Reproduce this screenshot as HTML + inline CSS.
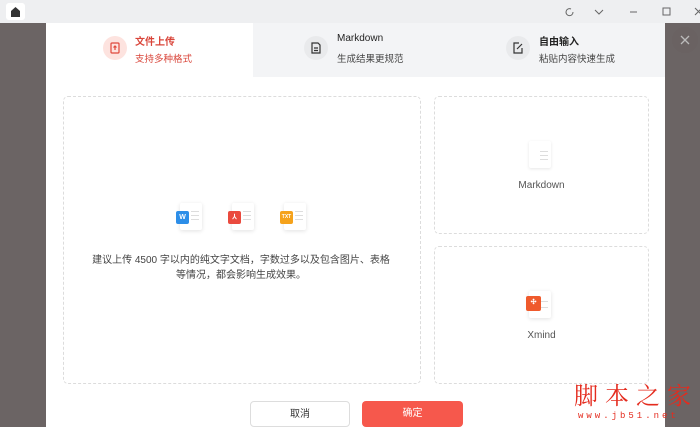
<!DOCTYPE html>
<html><head><meta charset="utf-8"><style>
*{margin:0;padding:0;box-sizing:border-box}
html,body{width:700px;height:427px;overflow:hidden}
body{position:relative;background:#6b6464;font-family:"Liberation Sans","Noto Sans CJK SC",sans-serif}
.tb{position:absolute;left:0;top:0;width:700px;height:23px;background:#eeeff1}
.home{position:absolute;left:6px;top:3px;width:19px;height:17px;background:#fff;border-radius:3px}
.modal{position:absolute;left:46px;top:23px;width:619px;height:404px;background:#fff}
.tabs{position:absolute;left:0;top:0;width:619px;height:54px;background:#f3f4f6}
.tab1{position:absolute;left:0;top:0;width:207px;height:54px;background:#fff}
.ic{position:absolute;width:24px;height:24px;border-radius:12px;background:#e9eaec}
.t1{position:absolute;font-size:10px;color:#222;white-space:nowrap}
.t2{position:absolute;font-size:9.5px;color:#444;white-space:nowrap}
.box{position:absolute;border:1px dashed #dcdcdc;border-radius:5px}
.btn{position:absolute;height:26px;border-radius:4px;font-size:10px;text-align:center;line-height:26px}
.doc{position:absolute;width:22px;height:27px;background:#fff;border-radius:2px;box-shadow:0 1px 4px rgba(0,0,0,.12)}
.doc i{position:absolute;right:3px;height:1px;width:8px;background:#ddd}
.badge{position:absolute;left:-4px;top:8px;width:13px;height:13px;border-radius:2px;color:#fff;font-size:7px;font-weight:bold;text-align:center;line-height:13px}
</style></head><body>
<div class="tb"><div class="home"><svg width="19" height="17"><path d="M5 8 L9.5 4 L14 8 V14 H5Z" fill="#333"/></svg></div>
<svg style="position:absolute;left:560px;top:4px" width="140" height="15" fill="none" stroke="#666" stroke-width="1">
<path d="M11 5 A3.5 3.5 0 1 0 13 8"/><path d="M35 6 L39 10 L43 6"/><path d="M70 8 H77"/><rect x="103" y="4" width="7" height="7"/><path d="M135 4 L142 11 M142 4 L135 11"/></svg></div>
<div style="position:absolute;left:672px;top:27px;width:26px;height:26px;border-radius:13px;background:#6a6262"><svg width="26" height="26" stroke="#bbb" stroke-width="1.3"><path d="M9 9 L17 17 M17 9 L9 17"/></svg></div>
<div class="modal">
<div class="tabs"><div class="tab1"></div>
<div class="ic" style="left:57px;top:13px;background:#fde3df"><svg width="24" height="24" fill="none" stroke="#e0493c" stroke-width="1.2"><rect x="8" y="7" width="8" height="10" rx="1"/><path d="M12 14 V10 M10.5 11.5 L12 10 L13.5 11.5"/></svg></div>
<div class="t1" style="left:89px;top:10px;color:#d9453a;font-weight:bold">文件上传</div>
<div class="t2" style="left:89px;top:28px;color:#d9453a">支持多种格式</div>
<div class="ic" style="left:258px;top:13px"><svg width="24" height="24" fill="none" stroke="#333" stroke-width="1.2"><path d="M8 7 H14 L16 9 V17 H8Z M10 12 H14 M10 14.5 H14"/></svg></div>
<div class="t1" style="left:291px;top:10px">Markdown</div>
<div class="t2" style="left:291px;top:28px">生成结果更规范</div>
<div class="ic" style="left:460px;top:13px"><svg width="24" height="24" fill="none" stroke="#333" stroke-width="1.2"><path d="M13 7 H8 V17 H16 V12 M11 13 L16 8"/></svg></div>
<div class="t1" style="left:493px;top:10px;font-weight:bold">自由输入</div>
<div class="t2" style="left:493px;top:28px">粘贴内容快速生成</div>
</div>
<div class="box" style="left:17px;top:73px;width:358px;height:288px"></div>
<div class="doc" style="left:134px;top:180px"><i style="top:8px"></i><i style="top:12px"></i><i style="top:16px"></i><div class="badge" style="background:#2d8ee8">W</div></div>
<div class="doc" style="left:186px;top:180px"><i style="top:8px"></i><i style="top:12px"></i><i style="top:16px"></i><div class="badge" style="background:#ea4a3e">⅄</div></div>
<div class="doc" style="left:238px;top:180px"><i style="top:8px"></i><i style="top:12px"></i><i style="top:16px"></i><div class="badge" style="background:#f5a21b;font-size:5px">TXT</div></div>
<div style="position:absolute;left:42px;top:230px;width:306px;font-size:10px;color:#444;text-align:center;line-height:15px">建议上传 4500 字以内的纯文字文档，字数过多以及包含图片、表格等情况，都会影响生成效果。</div>
<div class="box" style="left:388px;top:73px;width:215px;height:138px"></div>
<div class="doc" style="left:483px;top:118px;box-shadow:0 1px 3px rgba(0,0,0,.1)"><i style="top:10px"></i><i style="top:14px"></i><i style="top:18px"></i></div>
<div style="position:absolute;left:388px;top:157px;width:215px;text-align:center;font-size:10px;color:#555">Markdown</div>
<div class="box" style="left:388px;top:223px;width:215px;height:138px"></div>
<div class="doc" style="left:483px;top:268px"><i style="top:10px"></i><i style="top:16px"></i><div class="badge" style="background:#ef5a2c;left:-3px;top:5px;width:15px;height:15px">✣</div></div>
<div style="position:absolute;left:388px;top:307px;width:215px;text-align:center;font-size:10px;color:#555">Xmind</div>
<div class="btn" style="left:204px;top:378px;width:100px;border:1px solid #ddd;color:#333">取消</div>
<div class="btn" style="left:316px;top:378px;width:101px;background:#f6584c;color:#fff">确定</div>
</div>
<div style="position:absolute;left:574px;top:380px;white-space:nowrap;font-family:'Noto Serif CJK SC',serif;font-size:24px;color:#e42b1e;letter-spacing:7px;line-height:28px">脚本之家</div>
<div style="position:absolute;left:578px;top:411px;white-space:nowrap;font-family:'Liberation Mono',monospace;font-size:9px;color:#e42b1e;letter-spacing:3px">www.jb51.net</div>
</body></html>
